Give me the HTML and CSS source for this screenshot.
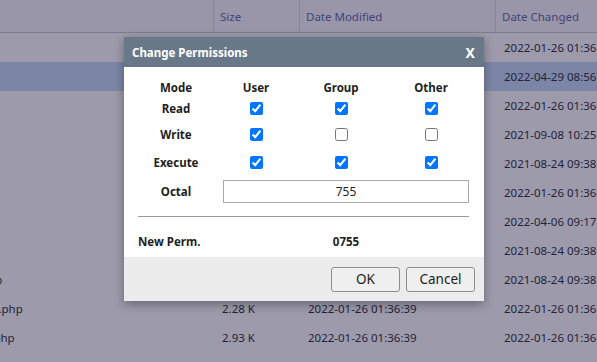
FILE: index.html
```html
<!DOCTYPE html>
<html lang="en">
<head>
<meta charset="utf-8">
<title>Change Permissions</title>
<link rel="stylesheet" href="styles.css">
</head>
<body>
<div class="page">
  <div class="list">
    <div class="thead">
      <div class="hc hname"></div>
      <div class="hc">Size</div>
      <div class="hc">Date Modified</div>
      <div class="hc">Date Changed</div>
    </div>
    <div class="row"><div class="cell name">wp-admin</div><div class="cell"></div><div class="cell">2022-01-26 01:36:39</div><div class="cell">2022-01-26 01:36:39</div></div>
    <div class="row selected"><div class="cell name">wp-content</div><div class="cell"></div><div class="cell">2022-04-29 08:56:12</div><div class="cell">2022-04-29 08:56:12</div></div>
    <div class="row"><div class="cell name">wp-includes</div><div class="cell"></div><div class="cell">2022-01-26 01:36:39</div><div class="cell">2022-01-26 01:36:39</div></div>
    <div class="row"><div class="cell name">.htaccess</div><div class="cell">523 B</div><div class="cell">2021-09-08 10:25:04</div><div class="cell">2021-09-08 10:25:04</div></div>
    <div class="row"><div class="cell name">index.php</div><div class="cell">405 B</div><div class="cell">2021-08-24 09:38:51</div><div class="cell">2021-08-24 09:38:51</div></div>
    <div class="row"><div class="cell name">license.txt</div><div class="cell">19.45 K</div><div class="cell">2022-01-26 01:36:39</div><div class="cell">2022-01-26 01:36:39</div></div>
    <div class="row"><div class="cell name">readme.html</div><div class="cell">7.25 K</div><div class="cell">2022-04-06 09:17:22</div><div class="cell">2022-04-06 09:17:22</div></div>
    <div class="row"><div class="cell name">wp-activate.php</div><div class="cell">7.00 K</div><div class="cell">2021-08-24 09:38:51</div><div class="cell">2021-08-24 09:38:51</div></div>
    <div class="row"><div class="cell name">wp-blog-header.php</div><div class="cell">351 B</div><div class="cell">2021-08-24 09:38:51</div><div class="cell">2021-08-24 09:38:51</div></div>
    <div class="row"><div class="cell name">wp-comments-post.php</div><div class="cell">2.28 K</div><div class="cell">2022-01-26 01:36:39</div><div class="cell">2022-01-26 01:36:39</div></div>
    <div class="row"><div class="cell name">wp-config-sample.php</div><div class="cell">2.93 K</div><div class="cell">2022-01-26 01:36:39</div><div class="cell">2022-01-26 01:36:39</div></div>
  </div>

  <div class="overlay"></div>

  <div class="dialog">
    <div class="dtitle">
      <span>Change Permissions</span>
      <span class="close">X</span>
    </div>
    <div class="dbody">
      <div class="perm-grid">
        <div class="lbl">Mode</div>
        <div class="lbl">User</div>
        <div class="lbl">Group</div>
        <div class="lbl">Other</div>

        <div class="lbl">Read</div>
        <div class="cb"><input type="checkbox" checked></div>
        <div class="cb"><input type="checkbox" checked></div>
        <div class="cb"><input type="checkbox" checked></div>

        <div class="lbl">Write</div>
        <div class="cb"><input type="checkbox" checked></div>
        <div class="cb"><input type="checkbox"></div>
        <div class="cb"><input type="checkbox"></div>

        <div class="lbl">Execute</div>
        <div class="cb"><input type="checkbox" checked></div>
        <div class="cb"><input type="checkbox" checked></div>
        <div class="cb"><input type="checkbox" checked></div>

        <div class="lbl">Octal</div>
        <div class="octal"><input type="text" value="755"></div>
      </div>
      <div class="sep"></div>
      <div class="result">
        <div class="rlbl">New Perm.</div>
        <div class="rval">0755</div>
      </div>
    </div>
    <div class="dfoot">
      <button class="btn">OK</button>
      <button class="btn">Cancel</button>
    </div>
  </div>
</div>
</body>
</html>
```

FILE: styles.css
```css
html, body {
  margin: 0;
  padding: 0;
}
body {
  font-family: "Noto Sans", "Open Sans", sans-serif;
  background: #ffffff;
  overflow: hidden;
}
.page {
  position: relative;
  width: 597px;
  height: 362px;
  overflow: hidden;
  background: #ffffff;
}

/* file list */
.list {
  width: 703px;
  margin-left: -106px;
  font-size: 11.5px;
  color: #222233;
}
.thead, .row {
  display: grid;
  grid-template-columns: 319px 86px 196px 102px;
}
.thead {
  height: 32px;
  border-bottom: 1px solid #c7c7d2;
  background: #f6f6f9;
}
.hc {
  line-height: 33px;
  padding-left: 6px;
  color: #5a5ea8;
  border-left: 1px solid #d6d6df;
  white-space: nowrap;
  overflow: hidden;
  font-size: 11.5px;
}
.hc.hname {
  border-left: none;
}
.row {
  height: 29px;
}
.row.selected {
  background: #c2d9f6;
}
.cell {
  line-height: 29px;
  padding-left: 9px;
  white-space: nowrap;
  overflow: hidden;
}
.cell.name {
  padding-left: 0;
}

/* overlay */
.overlay {
  position: absolute;
  inset: 0;
  background: rgba(37, 33, 68, 0.45);
}

/* dialog */
.dialog {
  position: absolute;
  left: 124px;
  top: 37px;
  width: 360px;
  background: #ffffff;
  box-shadow: 0 3px 10px rgba(0, 0, 0, 0.35);
  color: #1e1e1e;
}
.dtitle {
  height: 30px;
  background: #687889;
  color: #ffffff;
  font-weight: bold;
  font-size: 11.5px;
  display: flex;
  align-items: center;
  justify-content: space-between;
  padding: 0 9px 0 8px;
}
.close {
  font-size: 14px;
  font-weight: bold;
}
.dbody {
  padding: 10px 15px 4px 14px;
}
.perm-grid {
  display: grid;
  grid-template-columns: 76px 84px 86px 94px;
  grid-template-rows: 20px 22px 30px 27px 30px;
  align-items: center;
  justify-items: center;
}
.lbl {
  font-weight: bold;
  font-size: 11.5px;
}
.cb {
  display: flex;
  align-items: center;
  justify-content: center;
}
.cb input {
  margin: 0;
  width: 13px;
  height: 13px;
}
.octal {
  grid-column: 2 / 5;
  justify-self: start;
  margin-left: 9px;
}
.octal input {
  box-sizing: border-box;
  width: 246px;
  height: 23px;
  border: 1px solid #a9a9a9;
  border-radius: 0;
  text-align: center;
  font-family: "Noto Sans", "Open Sans", sans-serif;
  font-size: 12px;
  color: #222;
  padding: 0;
  margin: 0;
  outline: none;
}
.sep {
  width: 331px;
  border-top: 1px solid #9a9a9a;
  margin-top: 10px;
}
.result {
  display: grid;
  grid-template-columns: 85px 246px;
  height: 24px;
  align-items: center;
  margin-top: 12px;
  font-weight: bold;
  font-size: 11.5px;
}
.rval {
  text-align: center;
}
.dfoot {
  height: 44px;
  box-sizing: border-box;
  background: #ececec;
  display: flex;
  justify-content: flex-end;
  align-items: center;
  gap: 6px;
  padding: 0 9px;
}
.btn {
  width: 69px;
  height: 25px;
  background: #efefef;
  border: 1px solid #8d8d8d;
  border-radius: 3px;
  font-family: "Noto Sans", "Open Sans", sans-serif;
  font-size: 13.5px;
  color: #222;
  padding: 0;
}
```
